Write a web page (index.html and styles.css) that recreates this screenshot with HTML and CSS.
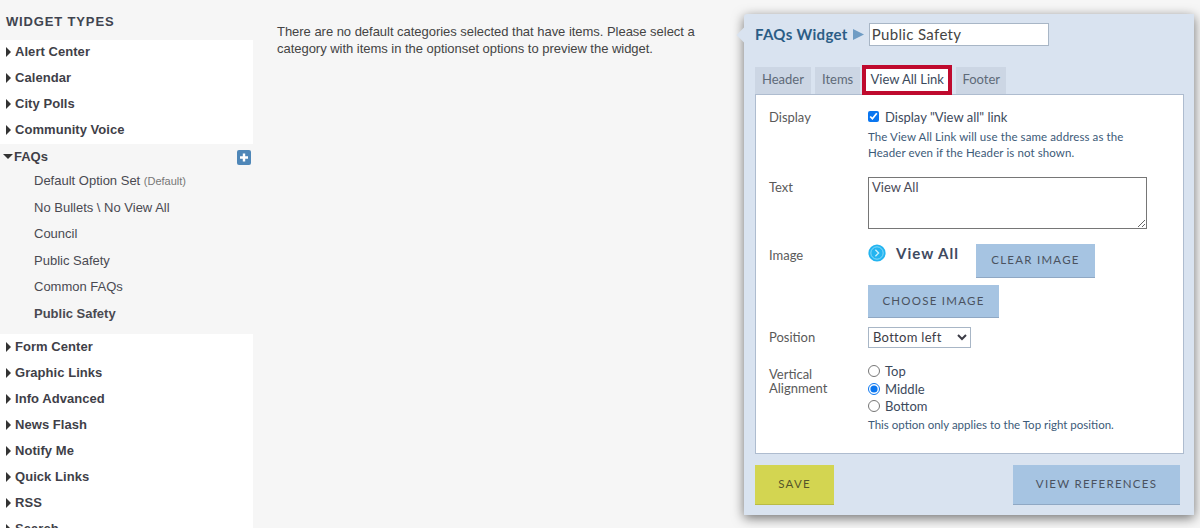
FILE: index.html
```
<!DOCTYPE html>
<html lang="en">
<head>
<meta charset="utf-8">
<title>Widget Types</title>
<link rel="stylesheet" href="styles.css">
</head>
<body>
<div class="page">
  <aside class="sidebar">
    <h2 class="side-title">WIDGET TYPES</h2>
    <ul class="type-list">
      <li class="type"><span class="arrow"></span>Alert Center</li>
      <li class="type"><span class="arrow"></span>Calendar</li>
      <li class="type"><span class="arrow"></span>City Polls</li>
      <li class="type"><span class="arrow"></span>Community Voice</li>
    </ul>
    <div class="open-group">
      <div class="open-head">
        <span class="arrow-down"></span><span class="open-name">FAQs</span>
        <svg class="plus" viewBox="0 0 14 15" width="14" height="15"><rect width="14" height="15" rx="2" fill="#4f87b8"/><path d="M7 3.5v8M3 7.5h8" stroke="#fff" stroke-width="2.4"/></svg>
      </div>
      <ul class="sets">
        <li class="set">Default Option Set <small class="default-tag">(Default)</small></li>
        <li class="set">No Bullets \ No View All</li>
        <li class="set">Council</li>
        <li class="set">Public Safety</li>
        <li class="set">Common FAQs</li>
        <li class="set set-current">Public Safety</li>
      </ul>
    </div>
    <ul class="type-list type-list-lower">
      <li class="type"><span class="arrow"></span>Form Center</li>
      <li class="type"><span class="arrow"></span>Graphic Links</li>
      <li class="type"><span class="arrow"></span>Info Advanced</li>
      <li class="type"><span class="arrow"></span>News Flash</li>
      <li class="type"><span class="arrow"></span>Notify Me</li>
      <li class="type"><span class="arrow"></span>Quick Links</li>
      <li class="type"><span class="arrow"></span>RSS</li>
      <li class="type"><span class="arrow"></span>Search</li>
    </ul>
  </aside>
  <main class="preview">
    <p class="notice">There are no default categories selected that have items. Please select a category with items in the optionset options to preview the widget.</p>
  </main>
</div>

<section class="panel">
  <span class="notch"></span>
  <header class="panel-head">
    <span class="panel-title">FAQs Widget</span>
    <svg class="crumb" viewBox="0 0 11 11" width="11" height="11"><path d="M0 0l11 5.5L0 11z" fill="#6f9cc4"/></svg>
    <input class="name-input" type="text" value="Public Safety">
  </header>
  <nav class="tabs">
    <span class="tab">Header</span>
    <span class="tab">Items</span>
    <span class="tab tab-active">View All Link</span>
    <span class="tab tab-footer">Footer</span>
  </nav>
  <div class="tab-body">
    <div class="field field-display">
      <div class="label">Display</div>
      <div class="control">
        <label class="check"><input type="checkbox" checked> Display "View all" link</label>
        <p class="hint hint-display">The View All Link will use the same address as the<br>Header even if the Header is not shown.</p>
      </div>
    </div>
    <div class="field field-text">
      <div class="label">Text</div>
      <div class="control"><textarea class="text-area">View All</textarea></div>
    </div>
    <div class="field field-image">
      <div class="label">Image</div>
      <div class="control">
        <div class="image-row">
          <svg class="va-icon" viewBox="0 0 18 18" width="18" height="18"><circle cx="9" cy="9" r="8.6" fill="#23b4f0"/><circle cx="9" cy="9" r="6.2" fill="none" stroke="#9fe2fb" stroke-width=".8"/><path d="M7.4 5.8L10.6 9l-3.2 3.2" fill="none" stroke="#c9f0fe" stroke-width="1.3"/></svg>
          <span class="va-text">View All</span>
          <button class="btn btn-blue btn-clear" type="button">CLEAR IMAGE</button>
        </div>
        <button class="btn btn-blue btn-choose" type="button">CHOOSE IMAGE</button>
      </div>
    </div>
    <div class="field field-position">
      <div class="label">Position</div>
      <div class="control">
        <select class="pos-select"><option>Bottom left</option></select>
      </div>
    </div>
    <div class="field field-align">
      <div class="label">Vertical<br>Alignment</div>
      <div class="control">
        <label class="radio"><input type="radio" name="va"> Top</label>
        <label class="radio"><input type="radio" name="va" checked> Middle</label>
        <label class="radio"><input type="radio" name="va"> Bottom</label>
        <p class="hint hint-align">This option only applies to the Top right position.</p>
      </div>
    </div>
  </div>
  <footer class="panel-foot">
    <button class="btn btn-save" type="button">SAVE</button>
    <button class="btn btn-blue btn-refs" type="button">VIEW REFERENCES</button>
  </footer>
</section>
</body>
</html>
```
FILE: styles.css
```
* { box-sizing: border-box; }
html, body { margin: 0; height: 528px; overflow: hidden; }
body { background: #f6f6f6; font-family: "Liberation Sans", Arial, sans-serif; color: #3c3c46; }
ul { list-style: none; margin: 0; padding: 0; }
.page { display: flex; height: 528px; overflow: hidden; }
.sidebar { width: 253px; flex: none; }
.side-title { margin: 0; height: 40px; padding: 14px 0 0 6px; font-size: 13px; line-height: 15px; font-weight: 700; letter-spacing: .85px; color: #40444f; }
.type-list { background: #fff; }
.type-list-lower { padding-top: 1px; }
.type { height: 26px; padding-left: 6px; font-size: 13px; line-height: 24px; font-weight: 700; letter-spacing: .05px; color: #3f3f48; display: flex; align-items: flex-start; }
.arrow { flex: none; width: 0; height: 0; margin: 7px 4px 0 0; border-left: 5px solid #333; border-top: 5px solid transparent; border-bottom: 5px solid transparent; }
.open-group { height: 190px; }
.open-head { display: flex; align-items: center; height: 26px; padding: 0 2px 2px 3px; font-size: 13px; font-weight: 700; color: #3f3f48; }
.arrow-down { flex: none; width: 0; height: 0; margin-right: 1px; border-top: 5px solid #333; border-left: 5.5px solid transparent; border-right: 5.5px solid transparent; }
.open-name { flex: 1; }
.plus { flex: none; margin-top: 2px; }
.sets { padding-left: 34px; }
.set { height: 26.6px; font-size: 13px; line-height: 21px; color: #4a4a52; }
.set-current { font-weight: 700; }
.default-tag { font-size: 11px; color: #777; }
.preview { flex: 1; padding: 23px 0 0 24px; }
.notice { margin: 0; width: 440px; font-size: 13px; line-height: 17px; letter-spacing: -.03px; color: #444; }

.panel { position: absolute; left: 744px; top: 14px; width: 450px; height: 501px; background: #d9e3f0; box-shadow: 0 3px 12px rgba(0,0,0,.55); border-radius: 3px 0 0 0; padding: 0 10px 0 11px; font-family: "Lato", sans-serif; font-size: 13px; color: #3c4a5c; }
.notch { position: absolute; left: -5px; top: 15px; width: 12px; height: 12px; background: #d9e3f0; transform: rotate(45deg); }
.panel-head { position: relative; display: flex; align-items: center; height: 41px; }
.panel-title { font-size: 15px; font-weight: 700; letter-spacing: .32px; line-height: 16px; padding-bottom: 2px; color: #2b5d86; }
.crumb { margin: 0 5px 0 5px; flex: none; }
.name-input { width: 180px; height: 23px; border: 1px solid #a8b6c6; padding: 0 2px 1px; font-family: "Lato", sans-serif; font-size: 15px; letter-spacing: .35px; color: #444; background: #fff; border-radius: 0; outline: none; }
.tabs { display: flex; gap: 4px; height: 39px; padding-top: 12px; align-items: flex-end; position: relative; z-index: 1; }
.tab { height: 27px; padding: 0 7px; background: #ccd6e4; color: #5e6a78; line-height: 25px; text-align: center; }
.tab-active { width: 90px; height: 30px; margin: 0 0 -1px -2px; padding: 0; background: #fff; border: 4px solid #bf0a2e; color: #3c4a5c; line-height: 20px; }
.tab-footer { width: 50px; padding: 0; }
.tab-body { width: 429px; height: 360px; background: #fff; border: 1px solid #aebccf; }
.field { display: flex; padding-left: 13px; }
.label { width: 99px; flex: none; font-size: 13px; line-height: 14px; color: #5a5a5a; }
.control { flex: 1; }
.field-display { padding-top: 14px; height: 82px; }
.field-text { height: 67px; }
.field-image { height: 83px; }
.field-position { height: 35px; }
.field-align { padding-top: .3px; }
.field-display .label { padding-top: 1px; }
.field-text .label { padding-top: 3px; }
.field-image .label { padding-top: 4px; }
.field-position .label { padding-top: 3px; }
.field-align .label { padding-top: 5px; }
.check { display: flex; align-items: center; gap: 6px; height: 15px; }
.check input { margin: 0; width: 11px; height: 11px; accent-color: #0a76f0; }
.hint { margin: 5px 0 0; font-size: 11.5px; line-height: 16px; color: #3c5a78; }
.hint-display { letter-spacing: .1px; }
.text-area { display: block; width: 279px; height: 52px; border: 1px solid #767676; padding: 1px 3px; margin: 0; font-family: "Lato", sans-serif; font-size: 13px; color: #4a4a58; border-radius: 0; resize: both; }
.image-row { display: flex; align-items: flex-start; height: 34px; }
.va-icon { flex: none; }
.va-text { width: 90px; padding-left: 10px; font-weight: 700; font-size: 15px; letter-spacing: 1px; line-height: 19px; color: #3f4a60; }
.btn { border: 0; border-bottom: 1px solid #8fa8c4; border-radius: 0; padding: 0; font-family: "Lato", sans-serif; font-size: 11.5px; letter-spacing: 1.25px; color: #4a5260; }
.btn-blue { background: #a6c4e2; }
.btn-clear { width: 119px; height: 34px; padding-bottom: 2px; }
.btn-choose { display: block; width: 131px; height: 33px; margin-top: 7px; padding-bottom: 2px; }
.pos-select { display: block; width: 103px; height: 21px; padding: 0 0 2px; border: 1px solid #a8b6c6; background: #fff; font-family: "Lato", sans-serif; font-size: 13px; letter-spacing: .3px; color: #3c3c46; border-radius: 0; }
.radio { display: flex; align-items: center; gap: 5px; height: 17.5px; }
.radio input { margin: 0; width: 12px; height: 12px; accent-color: #0a76f0; }
.hint-align { margin-top: 2px; }
.panel-foot { display: flex; justify-content: space-between; padding: 11px 4px 0 0; }
.btn-save { width: 79px; height: 40px; padding-bottom: 3px; background: #d3d551; border-bottom-color: #b9bb45; color: #55552a; }
.btn-refs { width: 167px; height: 40px; padding-bottom: 3px; }
```
